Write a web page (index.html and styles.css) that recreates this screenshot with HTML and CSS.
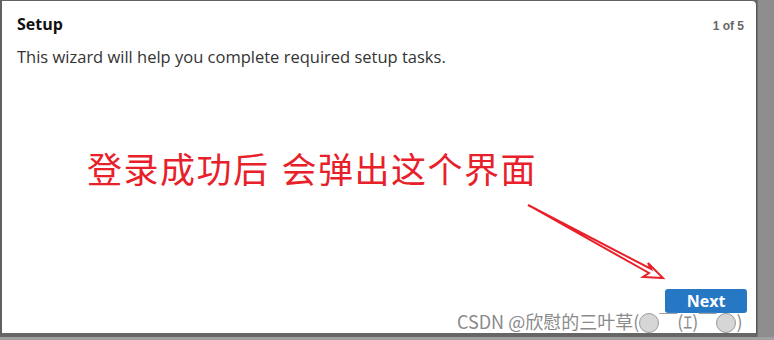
FILE: index.html
```html
<!DOCTYPE html>
<html lang="en">
<head>
    <meta charset="UTF-8">
    <meta name="viewport" content="width=device-width, initial-scale=1.0">
    <title>Setup</title>
    <link rel="stylesheet" href="styles.css">
</head>
<body>
    <div class="screen">
        <div class="dialog">
            <div class="dialog-header">
                <h1 class="title">Setup</h1>
                <span class="step">1 of 5</span>
            </div>
            <p class="intro">This wizard will help you complete required setup tasks.</p>
            <div class="dialog-footer">
                <button class="next-btn">Next</button>
            </div>
        </div>
        <div class="side-strip"></div>
    </div>

    <div class="note">登录成功后<span class="gap"></span>会弹出这个界面</div>

    <svg class="arrow" width="774" height="340" viewBox="0 0 774 340">
        <polygon points="528,205 651,269 648,263 663,278 643,277 649,273" fill="#fff" stroke="#e8202a" stroke-width="2" stroke-linejoin="miter"/>
    </svg>

    <div class="watermark">CSDN @欣慰的三叶草(<span class="dot"></span>￣(ｴ)￣<span class="dot"></span>)</div>
</body>
</html>
```

FILE: styles.css
```css
body {
    margin: 0;
    width: 774px;
    height: 340px;
    overflow: hidden;
    background: #a0a0a0;
    font-family: "Open Sans", Arial, sans-serif;
}
.screen {
    display: flex;
    height: 337px;
    background: #666;
}
.dialog {
    width: 757px;
    height: 335px;
    box-sizing: border-box;
    background: #fff;
    border-left: 2px solid #5e635e;
    border-top: 1px solid #5e635e;
    border-right: 1px solid #555;
    border-bottom: 2px solid #666;
    border-top-right-radius: 5px;
    display: flex;
    flex-direction: column;
    padding: 0 9px 0 15px;
}
.side-strip {
    flex: 1;
    background: #8d8d8d;
    border-left: 1px solid #707070;
}
.dialog-header {
    display: flex;
    justify-content: space-between;
    align-items: baseline;
    padding-top: 12px;
}
.title {
    margin: 0;
    font-size: 16px;
    font-weight: bold;
    color: #111;
}
.step {
    margin-right: 3px;
    font-size: 12px;
    font-weight: bold;
    color: #666;
    font-family: Arial, "Liberation Sans", sans-serif;
}
.intro {
    margin: 10px 0 0;
    font-size: 16.5px;
    color: #333;
}
.dialog-footer {
    margin-top: auto;
    display: flex;
    justify-content: flex-end;
    padding-bottom: 20px;
}
.next-btn {
    width: 82px;
    height: 24px;
    background: #2677c4;
    color: #fff;
    border: none;
    border-radius: 3px;
    font-family: "Open Sans", Arial, sans-serif;
    font-size: 16px;
    font-weight: bold;
    padding: 0;
    line-height: 24px;
}
.note {
    position: absolute;
    left: 87px;
    top: 143px;
    font-family: "Noto Sans CJK SC", sans-serif;
    font-size: 35px;
    line-height: 50px;
    color: #e8202a;
    letter-spacing: 1.5px;
}
.gap {
    display: inline-block;
    width: 12px;
}
.arrow {
    position: absolute;
    left: 0;
    top: 0;
}
.watermark {
    position: absolute;
    left: 457px;
    top: 309px;
    font-family: "Noto Sans CJK SC", sans-serif;
    font-size: 18px;
    line-height: 24px;
    color: #8a8a8a;
    text-shadow: 0 0 1px #fff;
}
.dot {
    display: inline-block;
    width: 20px;
    height: 20px;
    box-sizing: border-box;
    border-radius: 50%;
    background: #d6d6d6;
    border: 1px solid #9a9a9a;
    vertical-align: -4px;
}
```
